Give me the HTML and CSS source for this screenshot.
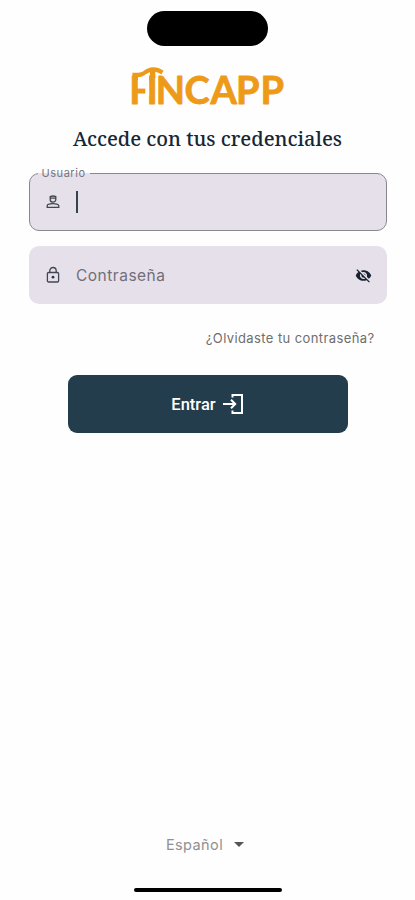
FILE: index.html
```html
<!DOCTYPE html>
<html lang="es">
<head>
<meta charset="utf-8">
<meta name="viewport" content="width=device-width, initial-scale=1">
<title>Fincapp</title>
<link rel="stylesheet" href="styles.css">
</head>
<body>
<main class="screen">
  <div class="island"></div>
  <svg class="logo" width="160" height="46" viewBox="128 64 160 46" role="img" aria-label="FINCAPP">
    <text class="logo-text" y="104.3" x="129.3 146.5 155.8 184.5 210.5 236 260.5">FINCAPP</text>
    <path class="logo-gap" d="M138 74h11v14.3h-11zM145.3 86h3.8v10h-3.8z"/>
    <path class="logo-roof" d="M132.4 80V72.8H138C143.5 72.8 146 67.4 153 67.2C157.5 67.2 161 68.8 163.6 70.8L161.3 74.4C159.3 73 157.5 72.2 155.3 71.8V78H150V72.2C146 73.4 143 77.2 138 77.2V80Z"/>
  </svg>
  <h1 class="title">Accede con tus credenciales</h1>
  <form class="form">
    <div class="field field-active">
      <span class="label">Usuario</span>
      <svg class="icon" width="16" height="16" viewBox="0 0 16 16"><path d="M5.2 2.6Q8 1.4 10.8 2.6V5.4A2.8 2.8 0 0 1 5.2 5.4ZM5.2 4.2h5.6M2.2 13.3v-1.5C2.2 10 5.5 9.6 8 9.6s5.8.4 5.8 2.2v1.5Z"/></svg>
      <span class="caret"></span>
    </div>
    <div class="field">
      <svg class="icon" width="16" height="18" viewBox="0 0 16 18"><rect x="2.4" y="6.5" width="11.2" height="9.5" rx="1.2"/><path d="M4.8 6.5V4.7a3.2 3.2 0 0 1 6.4 0v1.8"/><circle class="solid" cx="8" cy="11.2" r="1.4"/></svg>
      <span class="placeholder">Contraseña</span>
      <svg class="eye" width="17" height="17" viewBox="0 0 24 24"><path d="M12 7c2.76 0 5 2.24 5 5 0 .65-.13 1.26-.36 1.83l2.92 2.92c1.51-1.26 2.7-2.89 3.43-4.75-1.73-4.39-6-7.5-11-7.5-1.4 0-2.74.25-3.98.7l2.16 2.16C10.74 7.13 11.35 7 12 7zM2 4.27l2.28 2.28.46.46C3.08 8.3 1.78 10.02 1 12c1.73 4.39 6 7.5 11 7.5 1.55 0 3.03-.3 4.38-.84l.42.42L19.73 22 21 20.73 3.27 3 2 4.27zM7.53 9.8l1.55 1.55c-.05.21-.08.43-.08.65 0 1.66 1.34 3 3 3 .22 0 .44-.03.65-.08l1.55 1.55c-.67.33-1.41.53-2.2.53-2.76 0-5-2.24-5-5 0-.79.2-1.53.53-2.2zm4.31-.78l3.15 3.15.02-.16c0-1.66-1.34-3-3-3l-.17.01z"/></svg>
    </div>
    <a class="forgot">¿Olvidaste tu contraseña?</a>
    <button class="submit" type="button"><span>Entrar</span>
      <svg class="enter" width="22" height="22" viewBox="0 0 22 22"><path d="M1 11h12M9 6.8l4.2 4.2L9 15.2M10.5 4.5V2H20v18h-9.5v-2.5"/></svg>
    </button>
  </form>
  <div class="language"><span>Español</span><i class="arrow"></i></div>
  <div class="home"></div>
</main>
</body>
</html>
```
FILE: styles.css
```css
* { box-sizing: border-box; }
body { margin: 0; background: #fefefe; font-family: Inter, "Liberation Sans", sans-serif; }
.screen { height: 900px; padding-top: 11px; display: flex; flex-direction: column; align-items: center; overflow: hidden; }
.island { width: 121px; height: 35px; border-radius: 18px; background: #000; flex: none; }
.logo { margin-top: 18px; flex: none; overflow: visible; }
.logo-text { font: 700 38px Lato, sans-serif; fill: #ee9a19; stroke: #ee9a19; stroke-width: .8; stroke-linejoin: round; }
.logo-gap { fill: #fefefe; }
.logo-roof { fill: #ee9a19; }
.title { margin: 15px 0 0; height: 28px; font: 500 20px/28px "Noto Serif", "DejaVu Serif Condensed", "DejaVu Serif", serif; letter-spacing: -.03px; color: #172635; white-space: nowrap; }
.form { width: 358px; margin-top: 20px; display: flex; flex-direction: column; }
.field { position: relative; height: 58px; margin-bottom: 15px; padding: 0 15px 0 16px; border-radius: 10px; background: #e6e0ea; display: flex; align-items: center; }
.field-active { border: 1px solid #8a8790; padding-left: 15px; }
.label { position: absolute; left: 8px; top: -8px; padding: 0 4px; font-size: 11px; line-height: 15px; letter-spacing: .55px; color: #777580; background: linear-gradient(#fefefe 7px, #e6e0ea 7px); }
.icon { fill: none; stroke: #414652; stroke-width: 1.3; }
.solid { fill: #303642; stroke: none; }
.caret { width: 2px; height: 22px; margin-left: 15px; background: #34434f; }
.placeholder { flex: 1; margin-left: 15.5px; font-size: 15.5px; letter-spacing: .5px; color: #716e77; }
.eye { fill: #182331; }
.forgot { align-self: flex-end; margin: 9px 12px 0 0; height: 20px; font-size: 13px; line-height: 20px; letter-spacing: .4px; color: #6e6e6e; white-space: nowrap; }
.submit { align-self: center; width: 280px; height: 58px; margin-top: 27px; border: 0; border-radius: 9px; background: #233d4d; color: #fff; display: flex; align-items: center; justify-content: center; gap: 6px; padding: 0; font: 500 16.5px Roboto, sans-serif; }
.enter { fill: none; stroke: #fff; stroke-width: 2; }
.language { margin-top: auto; height: 24px; display: flex; align-items: center; gap: 11px; margin-right: 5px; font-size: 14.5px; letter-spacing: .4px; color: #909092; }
.arrow { border: 5px solid transparent; border-top-color: #555; border-bottom: 0; }
.home { flex: none; width: 148px; height: 4px; margin: 32px 0 8px; border-radius: 2px; background: #000; }
```
